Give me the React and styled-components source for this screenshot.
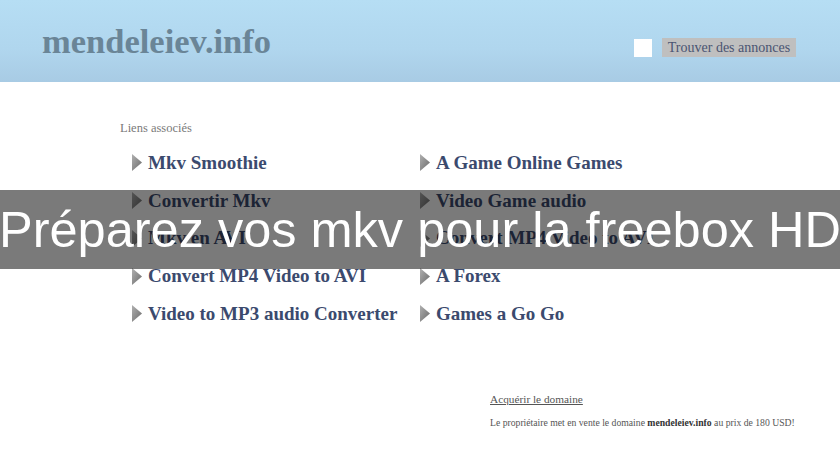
import React from "react";
import styled, { createGlobalStyle } from "styled-components";

const GlobalStyle = createGlobalStyle`
  html, body {
    margin: 0;
    padding: 0;
    background: #ffffff;
  }
  body {
    width: 840px;
    height: 460px;
    overflow: hidden;
    font-family: "Liberation Serif", "Times New Roman", serif;
  }
`;

const Page = styled.div`
  position: relative;
  width: 840px;
  height: 460px;
  background: #ffffff;
`;

const Header = styled.header`
  height: 82px;
  box-sizing: border-box;
  padding: 0 44px 0 42px;
  display: flex;
  align-items: center;
  justify-content: space-between;
  background: linear-gradient(to bottom, #b6def4 0%, #b0d6ee 60%, #a8cbe4 100%);
`;

const Logo = styled.div`
  font-family: "Liberation Serif", "Times New Roman", serif;
  font-weight: bold;
  font-size: 34.5px;
  color: #6a8597;
  margin-top: 1px;
`;

const SearchBox = styled.div`
  display: flex;
  align-items: center;
  gap: 10px;
  margin-top: 13px;
`;

const Check = styled.span`
  display: block;
  width: 18px;
  height: 18px;
  background: #ffffff;
`;

const FindButton = styled.button`
  height: 19px;
  width: 134px;
  padding: 0;
  border: none;
  background: #bfbfbf;
  color: #4a5472;
  font-family: "Liberation Serif", "Times New Roman", serif;
  font-size: 14px;
  line-height: 19px;
  cursor: pointer;
`;

const Content = styled.main`
  padding: 38px 0 0 120px;
`;

const Title = styled.div`
  font-size: 12.5px;
  color: #7a7a7a;
  height: 16px;
  line-height: 16px;
`;

const LinkGrid = styled.div`
  display: grid;
  grid-template-columns: 288px 288px;
  grid-auto-rows: 37.75px;
  margin: 8px 0 0 12px;
`;

const LinkItem = styled.a`
  display: flex;
  align-items: center;
  gap: 6px;
  font-size: 19px;
  font-weight: bold;
  color: #3b4a6e;
  text-decoration: none;
  white-space: nowrap;
  cursor: pointer;
`;

const Domain = styled.div`
  margin: 59px 0 0 370px;
  color: #555555;
`;

const BuyLink = styled.a`
  display: block;
  font-size: 11.3px;
  color: #555555;
  text-decoration: underline;
  line-height: 14px;
`;

const Notice = styled.p`
  margin: 11px 0 0;
  font-size: 9.7px;
  line-height: 12px;
  color: #555555;

  b {
    color: #333333;
  }
`;

const Banner = styled.div`
  position: absolute;
  left: 0;
  top: 190px;
  width: 840px;
  height: 79px;
  background: rgba(0, 0, 0, 0.52);
  display: flex;
  align-items: center;
  justify-content: center;
  color: #ffffff;
  font-family: "Liberation Sans", Arial, sans-serif;
  font-size: 50.5px;
  white-space: nowrap;
  overflow: hidden;
`;

function Arrow() {
  return (
    <svg width="10" height="17" viewBox="0 0 10 17">
      <defs>
        <linearGradient id="arr" x1="0" y1="0" x2="1" y2="1">
          <stop offset="0" stopColor="#b0b0b0" />
          <stop offset="1" stopColor="#6a6a6a" />
        </linearGradient>
      </defs>
      <polygon points="0,0 10,8.5 0,17" fill="url(#arr)" />
    </svg>
  );
}

const links = [
  "Mkv Smoothie",
  "A Game Online Games",
  "Convertir Mkv",
  "Video Game audio",
  "Mkv en AVI",
  "Convert MP4 Video to AVI",
  "Convert MP4 Video to AVI",
  "A Forex",
  "Video to MP3 audio Converter",
  "Games a Go Go",
];

export default function App() {
  return (
    <Page>
      <GlobalStyle />
      <Header>
        <Logo>mendeleiev.info</Logo>
        <SearchBox>
          <Check />
          <FindButton>Trouver des annonces</FindButton>
        </SearchBox>
      </Header>
      <Content>
        <Title>Liens associés</Title>
        <LinkGrid>
          {links.map((label, i) => (
            <LinkItem key={i}>
              <Arrow />
              {label}
            </LinkItem>
          ))}
        </LinkGrid>
        <Domain>
          <BuyLink>Acquérir le domaine</BuyLink>
          <Notice>
            Le propriétaire met en vente le domaine <b>mendeleiev.info</b> au
            prix de 180 USD!
          </Notice>
        </Domain>
      </Content>
      <Banner>Préparez vos mkv pour la freebox HD</Banner>
    </Page>
  );
}
